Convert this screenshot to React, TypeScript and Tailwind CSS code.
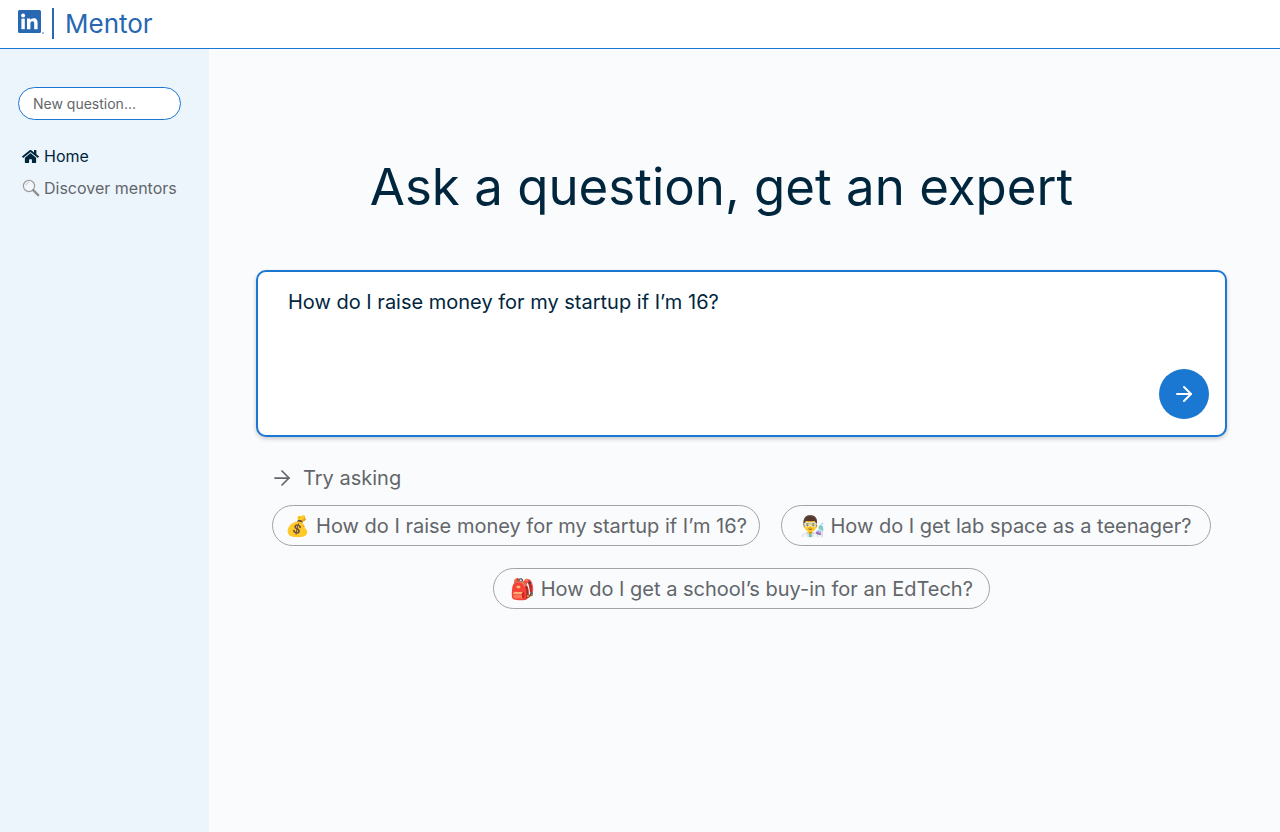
import { ArrowRight } from "lucide-react";

function Logo() {
  return (
    <svg width="27" height="27" viewBox="0 0 27 27" className="shrink-0">
      <rect x="0" y="0" width="23" height="23" rx="1.5" fill="#2867b2" />
      <rect x="3.4" y="8.6" width="3.4" height="10.6" fill="#fff" />
      <circle cx="5.1" cy="5.4" r="2" fill="#fff" />
      <path d="M9 8.6h3.2v1.5c.6-1 1.8-1.8 3.4-1.8 3.2 0 4 2 4 5v5.9h-3.4v-5.2c0-1.4-.2-2.8-1.8-2.8-1.7 0-2 1.2-2 2.7v5.3H9z" fill="#fff" />
      <circle cx="25" cy="23" r="1" fill="#2867b2" opacity="0.55" />
    </svg>
  );
}

function HomeIcon() {
  return (
    <svg width="17" height="15" viewBox="0 0 576 512" fill="#00263e" className="shrink-0">
      <path d="M280.4 148.3L96 300.1V464a16 16 0 0 0 16 16l112.1-.3a16 16 0 0 0 15.9-16V368a16 16 0 0 1 16-16h64a16 16 0 0 1 16 16v95.6a16 16 0 0 0 16 16.1L464 480a16 16 0 0 0 16-16V300L295.7 148.3a12.2 12.2 0 0 0-15.3 0zM571.6 251.5L488 182.6V44.1a12 12 0 0 0-12-12h-56a12 12 0 0 0-12 12v72.6L318.5 43a48 48 0 0 0-61 0L4.3 251.5a12 12 0 0 0-1.6 16.9l25.5 31a12 12 0 0 0 16.9 1.6l235.2-193.7a12.2 12.2 0 0 1 15.3 0L530.9 301a12 12 0 0 0 16.9-1.6l25.5-31a12 12 0 0 0-1.7-16.9z" />
    </svg>
  );
}

function LensIcon() {
  return (
    <svg width="18" height="18" viewBox="0 0 18 18" fill="none" className="shrink-0">
      <circle cx="7" cy="7" r="5.6" fill="#f4f7fa" stroke="#9a9ea3" strokeWidth="1.2" />
      <path d="M4 6.5a3.3 3.3 0 0 1 3-3" stroke="#c4c8cc" strokeWidth="1" />
      <path d="M11.2 11.2L16.2 16.2" stroke="#8d8f92" strokeWidth="2.4" strokeLinecap="round" />
    </svg>
  );
}

const chip = "flex h-[41px] items-center rounded-full border border-[#a3a3a3] whitespace-nowrap text-[20px] text-[#62666a]";

export default function App() {
  return (
    <div className="flex h-[832px] flex-col overflow-hidden bg-[#fafbfd] font-['Inter',sans-serif]">
      <header className="flex h-[49px] shrink-0 items-center border-b border-[#1a77d2] bg-white pl-[18px]">
        <div className="mb-px flex items-center">
          <Logo />
          <div className="ml-[7px] h-[31px] w-0.5 bg-[#2867b2]" />
          <span className="ml-[11px] text-[26px] leading-none text-[#2867b2]">Mentor</span>
        </div>
      </header>
      <div className="flex min-h-0 flex-1">
        <aside className="w-[209px] shrink-0 bg-[#edf5fc] pt-[38px] pl-[18px]">
          <div className="flex h-[33px] w-[163px] items-center rounded-full border border-[#1a77d2] bg-white pl-[14px] text-[14px] text-[#62666a]">
            New question...
          </div>
          <nav className="mt-[20px] ml-1 flex flex-col text-[16px]">
            <div className="flex h-8 items-center gap-[5px] text-[#00263e]">
              <HomeIcon />
              <span>Home</span>
            </div>
            <div className="flex h-8 items-center gap-1 text-[#62666a]">
              <LensIcon />
              <span>Discover mentors</span>
            </div>
          </nav>
        </aside>
        <main className="min-w-0 flex-1 pl-[47px] pr-[53px]">
          <h1 className="mt-[104px] pr-[40px] text-center text-[51px] leading-[68px] font-normal text-[#00263e]">
            Ask a question, get an expert
          </h1>
          <div className="mt-[49px] flex h-[167px] flex-col justify-between rounded-[10px] border-2 border-[#1a77d2] bg-white pt-[16px] pr-4 pb-4 pl-[30px] shadow-[0_2px_4px_rgba(0,0,0,0.2)]">
            <p className="text-[20px] leading-[28px] text-[#00263e]">How do I raise money for my startup if I’m 16?</p>
            <div className="flex justify-end">
              <button className="flex h-[50px] w-[50px] items-center justify-center rounded-full bg-[#1a77d2] text-white">
                <ArrowRight size={24} strokeWidth={2} />
              </button>
            </div>
          </div>
          <div className="mt-[27px] ml-[14px] flex h-7 items-center gap-[9px] text-[20px] text-[#62666a]">
            <ArrowRight size={24} strokeWidth={1.75} />
            <span>Try asking</span>
          </div>
          <div className="mt-[13px] flex flex-wrap justify-center gap-x-[21px] gap-y-[22px]">
            <div className={chip + " pl-3 pr-3"}>💰 How do I raise money for my startup if I’m 16?</div>
            <div className={chip + " pl-[18px] pr-[18px]"}>👨‍🔬 How do I get lab space as a teenager?</div>
            <div className={chip + " pl-4 pr-4"}>🎒 How do I get a school’s buy-in for an EdTech?</div>
          </div>
        </main>
      </div>
    </div>
  );
}
